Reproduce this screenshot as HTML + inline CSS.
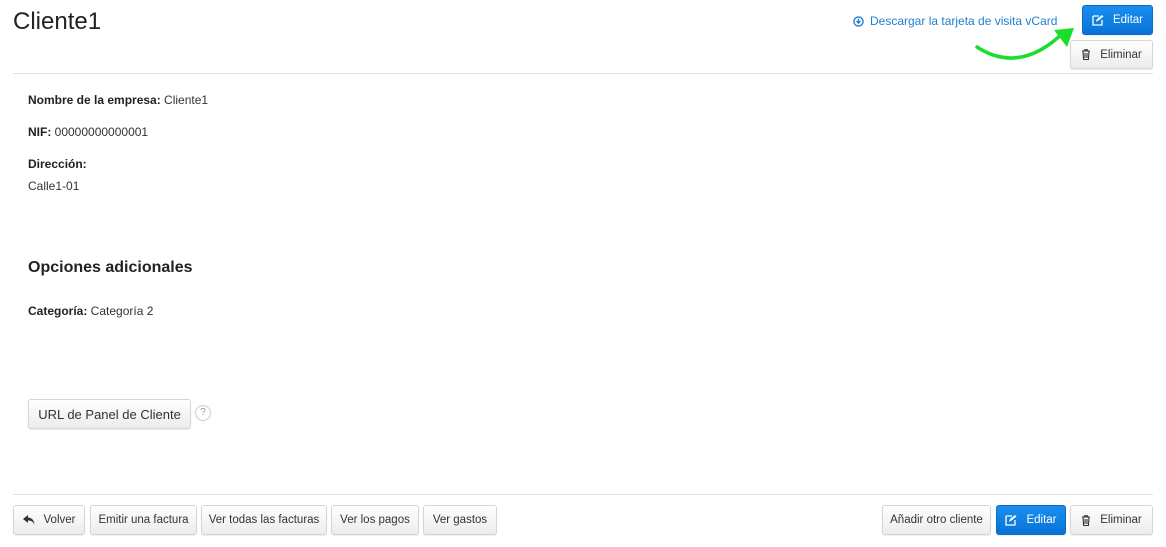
<!DOCTYPE html>
<html><head><meta charset="utf-8"><style>
*{box-sizing:border-box;margin:0;padding:0}
body{width:1166px;height:547px;background:#fff;font-family:"Liberation Sans",Arial,sans-serif;color:#333;position:relative;overflow:hidden;font-size:12px}
.a{position:absolute;white-space:nowrap}
.btn{position:absolute;height:30px;border:1px solid #d5d5d5;border-radius:3px;background:linear-gradient(#fff,#ececec);font-size:11.5px;color:#333;display:flex;align-items:center;justify-content:center;gap:9px;box-shadow:0 1px 1px rgba(0,0,0,.08)}
.blue{background:linear-gradient(#1a8ff0,#0872d6);border-color:#0a6cc8;color:#fff}
.hr{position:absolute;left:13px;width:1140px;height:1px;background:#e3e3e6}
b{font-weight:bold;color:#222}
</style></head><body>
<div class="a" style="left:13px;top:8px;font-size:24px;color:#222">Cliente1</div>
<div class="a" style="left:853px;top:14px;font-size:12px;color:#1f7fd1;display:flex;align-items:center;gap:6px">
<svg width="11" height="11" viewBox="0 0 12 12"><circle cx="6" cy="6" r="5" fill="none" stroke="#1f7fd1" stroke-width="1.5"/><path d="M6 3v4.5M3.8 5.5L6 7.8 8.2 5.5" fill="none" stroke="#1f7fd1" stroke-width="1.5"/></svg>Descargar la tarjeta de visita vCard</div>
<div class="btn blue" style="left:1082px;top:5px;width:71px"><svg width="12" height="12" viewBox="0 0 12 12"><path d="M1 2h6M1 2v9h9V6" fill="none" stroke="#fff" stroke-width="1.3"/><path d="M4 8l1-3 5-4 1.5 1.5-5 4z" fill="#fff"/></svg>Editar</div>
<div class="btn" style="left:1070px;top:40px;width:83px;height:29px"><svg width="10" height="11" viewBox="0 0 10 11"><path d="M1 2h8M3.5 2V.8h3V2M2 2l.6 8.5h4.8L8 2M4 4v5M6 4v5" fill="none" stroke="#333" stroke-width="1.1"/></svg>Eliminar</div>
<svg class="a" style="left:970px;top:20px" width="110" height="50"><path d="M7 27 Q50 55 94 12" fill="none" stroke="#1adf2a" stroke-width="3.5" stroke-linecap="round"/><path d="M84 10 L104 8 L97 27 Z" fill="#1adf2a"/></svg>
<div class="hr" style="top:73px"></div>
<div class="a" style="left:28px;top:93px"><b>Nombre de la empresa:</b> Cliente1</div>
<div class="a" style="left:28px;top:125px"><b>NIF:</b> 00000000000001</div>
<div class="a" style="left:28px;top:157px"><b>Dirección:</b></div>
<div class="a" style="left:28px;top:179px">Calle1-01</div>
<div class="a" style="left:28px;top:259px;font-size:16px;font-weight:bold;color:#222">Opciones adicionales</div>
<div class="a" style="left:28px;top:304px"><b>Categoría:</b> Categoría 2</div>
<div class="btn" style="left:28px;top:399px;width:163px;font-size:13px">URL de Panel de Cliente</div>
<div class="a" style="left:195px;top:405px;width:16px;height:16px;border:1px solid #ccc;border-radius:50%;font-size:10px;color:#999;text-align:center;line-height:14px">?</div>
<div class="hr" style="top:494px"></div>
<div class="btn" style="left:13px;top:505px;width:72px"><svg width="12" height="10" viewBox="0 0 12 10"><path d="M5 0L0 4l5 4V5.5c3 0 5 1 6.5 4C11 5 9 3 5 2.5z" fill="#333"/></svg>Volver</div>
<div class="btn" style="left:90px;top:505px;width:107px">Emitir una factura</div>
<div class="btn" style="left:201px;top:505px;width:126px">Ver todas las facturas</div>
<div class="btn" style="left:331px;top:505px;width:88px">Ver los pagos</div>
<div class="btn" style="left:423px;top:505px;width:74px">Ver gastos</div>
<div class="btn" style="left:882px;top:505px;width:109px">Añadir otro cliente</div>
<div class="btn blue" style="left:996px;top:505px;width:70px"><svg width="12" height="12" viewBox="0 0 12 12"><path d="M1 2h6M1 2v9h9V6" fill="none" stroke="#fff" stroke-width="1.3"/><path d="M4 8l1-3 5-4 1.5 1.5-5 4z" fill="#fff"/></svg>Editar</div>
<div class="btn" style="left:1070px;top:505px;width:83px"><svg width="10" height="11" viewBox="0 0 10 11"><path d="M1 2h8M3.5 2V.8h3V2M2 2l.6 8.5h4.8L8 2M4 4v5M6 4v5" fill="none" stroke="#333" stroke-width="1.1"/></svg>Eliminar</div>
</body></html>
